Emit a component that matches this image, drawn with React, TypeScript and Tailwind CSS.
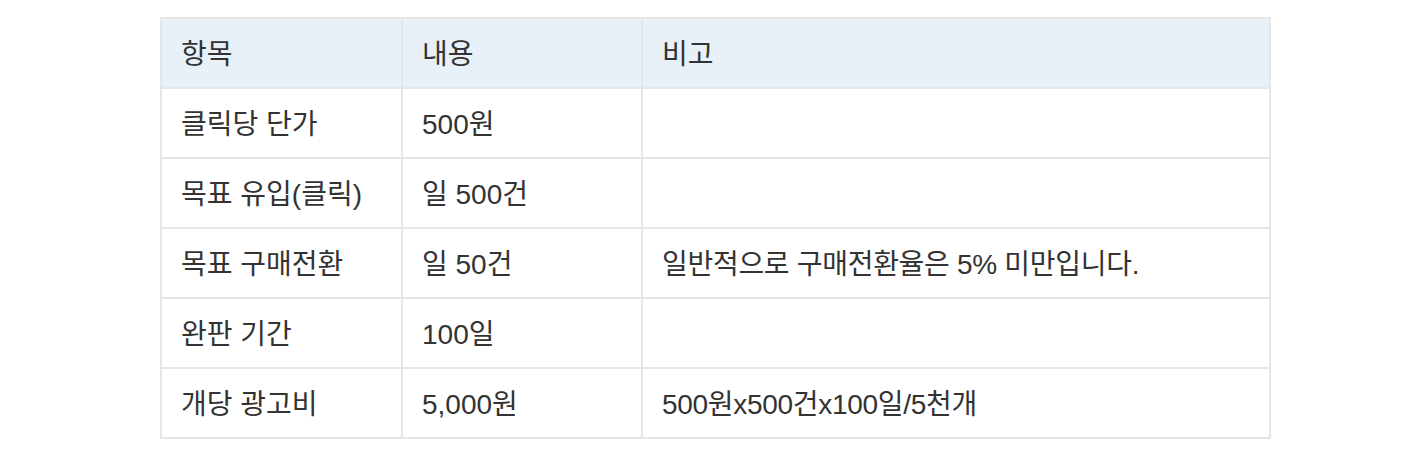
const rows: [string, string, string][] = [
  ["클릭당 단가", "500원", ""],
  ["목표 유입(클릭)", "일 500건", ""],
  ["목표 구매전환", "일 50건", "일반적으로 구매전환율은 5% 미만입니다."],
  ["완판 기간", "100일", ""],
  ["개당 광고비", "5,000원", "500원x500건x100일/5천개"],
];

export default function App() {
  return (
    <div className="min-h-screen bg-white pt-[17px] pl-[160px] font-['Liberation_Sans','Noto_Sans_CJK_KR',sans-serif] text-[28px] leading-none text-[#333333]">
      <table className="w-[1111px] border-collapse table-fixed">
        <colgroup>
          <col className="w-[241px]" />
          <col className="w-[240px]" />
          <col />
        </colgroup>
        <thead>
          <tr className="h-[70px] bg-[#e8f1f7]">
            <th className="border-2 border-[#e6e6e6] px-[19px] pt-[4px] text-left font-normal">항목</th>
            <th className="border-2 border-[#e6e6e6] px-[19px] pt-[4px] text-left font-normal">내용</th>
            <th className="border-2 border-[#e6e6e6] px-[19px] pt-[4px] text-left font-normal">비고</th>
          </tr>
        </thead>
        <tbody>
          {rows.map((r) => (
            <tr key={r[0]} className="h-[70px]">
              <td className="border-2 border-[#e6e6e6] px-[19px] pt-[4px]">{r[0]}</td>
              <td className="border-2 border-[#e6e6e6] px-[19px] pt-[4px]">{r[1]}</td>
              <td className="border-2 border-[#e6e6e6] px-[19px] pt-[4px] tracking-[-0.3px]">{r[2]}</td>
            </tr>
          ))}
        </tbody>
      </table>
    </div>
  );
}
